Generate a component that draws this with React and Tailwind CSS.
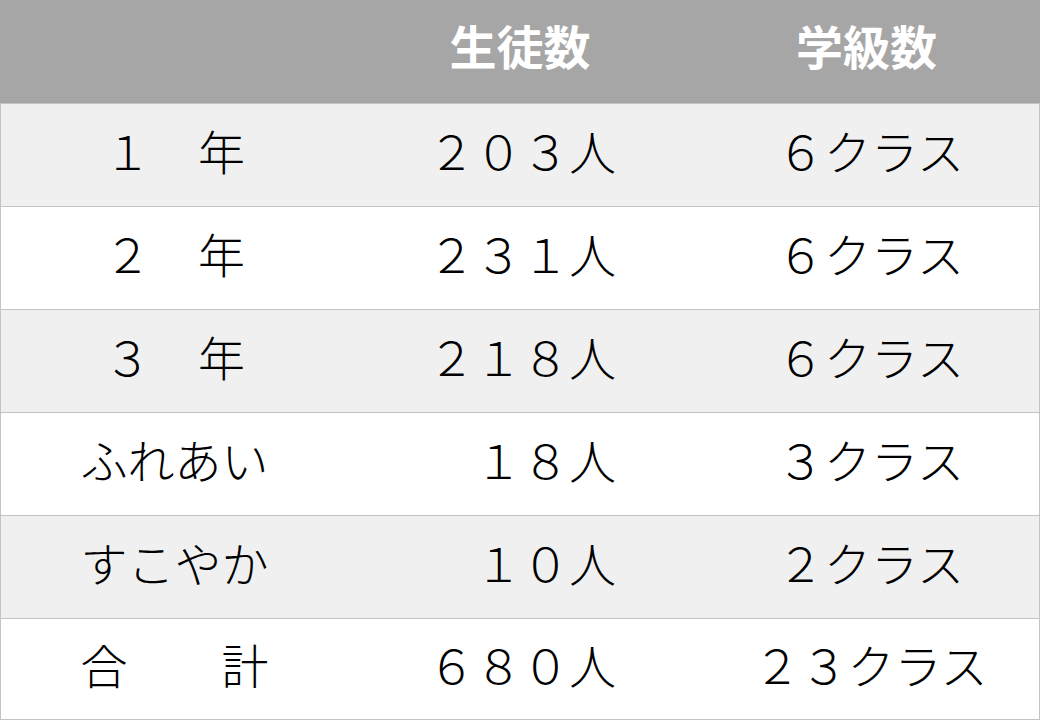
const ROWS = [
  { label: "１　年", students: "２０３人", classes: "６クラス" },
  { label: "２　年", students: "２３１人", classes: "６クラス" },
  { label: "３　年", students: "２１８人", classes: "６クラス" },
  { label: "ふれあい", students: "１８人", classes: "３クラス" },
  { label: "すこやか", students: "１０人", classes: "２クラス" },
  { label: "合　　計", students: "６８０人", classes: "２３クラス" },
];

export default function App() {
  return (
    <div
      className="w-[1040px] h-[720px] overflow-hidden bg-white text-black"
      style={{ fontFamily: '"Noto Sans CJK JP", "Noto Sans", sans-serif' }}
    >
      {/* Header */}
      <div className="grid h-[103px] grid-cols-[347px_346px_347px] items-center bg-[#a6a6a6] pb-[14px] text-[47px] font-bold leading-none text-white">
        <div />
        <div className="text-center">生徒数</div>
        <div className="text-center">学級数</div>
      </div>

      {/* Body rows */}
      {ROWS.map((row, i) => (
        <div
          key={row.label}
          className={`grid grid-cols-[347px_346px_347px] items-center border-x border-t border-[#c4c4c4] pb-[12px] text-[47px] font-light leading-none ${
            i % 2 === 0 ? "bg-[#f0f0f0]" : "bg-white"
          } ${i === ROWS.length - 1 ? "h-[102px] border-b" : "h-[103px]"}`}
        >
          <div className="text-center">{row.label}</div>
          <div className="pr-[78px] text-right">{row.students}</div>
          <div className="pl-[6px] text-center">{row.classes}</div>
        </div>
      ))}
    </div>
  );
}
